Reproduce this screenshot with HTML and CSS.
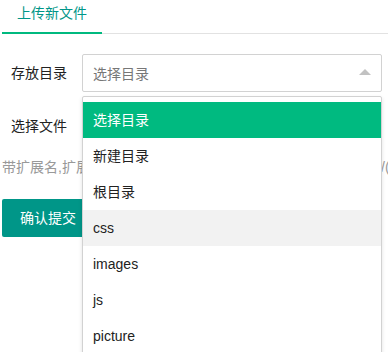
FILE: index.html
```html
<!DOCTYPE html>
<html lang="zh-CN">
<head>
<meta charset="utf-8">
<title>上传新文件</title>
<link rel="stylesheet" href="styles.css">
</head>
<body>
<div class="page">
  <div class="tab-title">
    <div class="tab-item active">上传新文件</div>
  </div>
  <form class="form">
    <div class="form-item">
      <label class="form-label">存放目录</label>
      <div class="select">
        <div class="select-title">
          <span class="placeholder">选择目录</span>
          <i class="edge"></i>
        </div>
        <dl class="select-menu">
          <dd class="this">选择目录</dd>
          <dd>新建目录</dd>
          <dd>根目录</dd>
          <dd class="hover">css</dd>
          <dd>images</dd>
          <dd>js</dd>
          <dd>picture</dd>
          <dd>upload</dd>
        </dl>
      </div>
    </div>
    <div class="form-item">
      <label class="form-label">选择文件</label>
      <div class="file-block"></div>
    </div>
    <div class="hint">带扩展名,扩展名将被保留，文件名仅支持字母数字下划线 111/(例如 a.jpg)</div>
    <div class="actions">
      <button type="button" class="btn">确认提交</button>
    </div>
  </form>
</div>
</body>
</html>
```
FILE: styles.css
```css
html,
body {
  height: 352px;
  overflow: hidden;
}
body {
  margin: 0;
  padding: 0;
  background: #fff;
  font-family: "Liberation Sans", Arial, "Noto Sans CJK SC", sans-serif;
  font-size: 14px;
  color: #333;
}
.page {
  padding-left: 2px;
  width: 386px;
  height: 352px;
}
.tab-title {
  display: flex;
  height: 33px;
  border-bottom: 1px solid #e2e2e2;
}
.tab-item {
  box-sizing: border-box;
  width: 100px;
  height: 34px;
  line-height: 26px;
  text-align: center;
  color: #009688;
}
.tab-item.active {
  border-bottom: 2px solid #00b97f;
}
.form {
  margin: 20px 0 0;
}
.form-item {
  display: flex;
  align-items: center;
  height: 38px;
  margin-bottom: 15px;
}
.form-label {
  box-sizing: border-box;
  width: 80px;
  padding-right: 15px;
  text-align: right;
  color: #222;
  line-height: 20px;
}
.select {
  position: relative;
  width: 300px;
  height: 38px;
}
.select-title {
  box-sizing: border-box;
  display: flex;
  align-items: center;
  height: 38px;
  padding: 0 10px;
  border: 1px solid #d2d2d2;
  border-radius: 2px;
  background: #fff;
}
.placeholder {
  flex: 1;
  color: #777;
}
.edge {
  width: 0;
  height: 0;
  border-left: 6px solid transparent;
  border-right: 6px solid transparent;
  border-bottom: 6px solid #c2c2c2;
  margin-top: -2px;
}
.select-menu {
  position: absolute;
  left: 0;
  top: 42px;
  z-index: 10;
  box-sizing: border-box;
  width: 300px;
  margin: 0;
  padding: 5px 0;
  background: #fff;
  border: 1px solid #d2d2d2;
  border-radius: 2px;
  box-shadow: 0 2px 4px rgba(0, 0, 0, 0.12);
}
.select-menu dd {
  margin: 0;
  padding: 0 10px;
  line-height: 36px;
  color: #222;
  white-space: nowrap;
}
.select-menu dd.this {
  background: #00ba80;
  color: #fff;
}
.select-menu dd.hover {
  background: #f2f2f2;
}
.file-block {
  width: 300px;
  height: 38px;
}
.hint {
  margin-top: -3px;
  line-height: 20px;
  color: #999;
  white-space: nowrap;
  overflow: hidden;
}
.actions {
  margin-top: 22px;
}
.btn {
  display: inline-block;
  height: 38px;
  line-height: 38px;
  padding: 0 18px;
  border: none;
  border-radius: 2px;
  background: #009688;
  color: #fff;
  font-family: inherit;
  font-size: 14px;
  cursor: pointer;
}
```
